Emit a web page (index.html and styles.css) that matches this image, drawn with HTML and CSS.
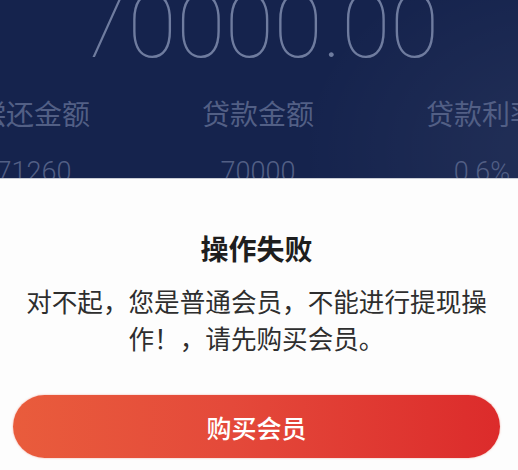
FILE: index.html
```html
<!DOCTYPE html>
<html lang="zh-CN">
<head>
    <meta charset="UTF-8">
    <meta name="viewport" content="width=device-width, initial-scale=1.0">
    <title>操作失败</title>
    <link rel="stylesheet" href="styles.css">
</head>
<body>
    <div class="hero">
        <div class="amount">70000.00</div>
        <div class="stats">
            <div class="stat">
                <div class="stat-label">偿还金额</div>
                <div class="stat-value">71260</div>
            </div>
            <div class="stat">
                <div class="stat-label">贷款金额</div>
                <div class="stat-value">70000</div>
            </div>
            <div class="stat">
                <div class="stat-label">贷款利率</div>
                <div class="stat-value">0.6%</div>
            </div>
        </div>
    </div>

    <div class="dialog">
        <div class="dialog-title">操作失败</div>
        <p class="dialog-text">对不起，您是普通会员，不能进行提现操作！，请先购买会员。</p>
        <button class="buy-button">购买会员</button>
    </div>
</body>
</html>
```

FILE: styles.css
```css
* {
    margin: 0;
    padding: 0;
    box-sizing: border-box;
    font-family: Roboto, "Noto Sans CJK SC", sans-serif;
}

body {
    width: 518px;
    height: 470px;
    overflow: hidden;
    background-color: #FDFDFD;
}

.hero {
    height: 179px;
    overflow: hidden;
    background-color: #15234D;
    background-image: radial-gradient(ellipse 260px 200px at 560px 150px, rgba(255,255,255,0.06), rgba(255,255,255,0) 100%);
    border-bottom: 1px solid #C9CDD6;
}

.amount {
    font-size: 89px;
    font-weight: 100;
    line-height: 89px;
    margin-top: -18px;
    text-align: center;
    color: #6F7C9F;
}

.stats {
    display: flex;
    width: 672px;
    margin-left: -78px;
    margin-top: 27px;
}

.stat {
    flex: 1;
    text-align: center;
}

.stat-label {
    font-size: 28px;
    line-height: 36px;
    color: #525F85;
}

.stat-value {
    font-size: 27px;
    font-weight: 300;
    line-height: 32px;
    margin-top: 22px;
    color: #525F85;
}

.dialog {
    display: flex;
    flex-direction: column;
    align-items: center;
    padding: 0 18px 0 13px;
}

.dialog-title {
    margin-top: 52px;
    font-size: 28px;
    font-weight: 700;
    line-height: 40px;
    color: #1E1E1E;
}

.dialog-text {
    margin-top: 14px;
    padding: 0 10px;
    font-size: 25.6px;
    line-height: 37px;
    text-align: center;
    color: #2E2E2E;
}

.buy-button {
    margin-top: 36px;
    width: 100%;
    height: 63px;
    border: none;
    border-radius: 32px;
    background: linear-gradient(90deg, #E95C3C 0%, #E4493A 45%, #DC2B2B 100%);
    box-shadow: 0 0 2px rgba(230, 80, 60, 0.5);
    color: #FFFFFF;
    font-size: 25px;
    font-weight: 500;
    cursor: pointer;
}
```
